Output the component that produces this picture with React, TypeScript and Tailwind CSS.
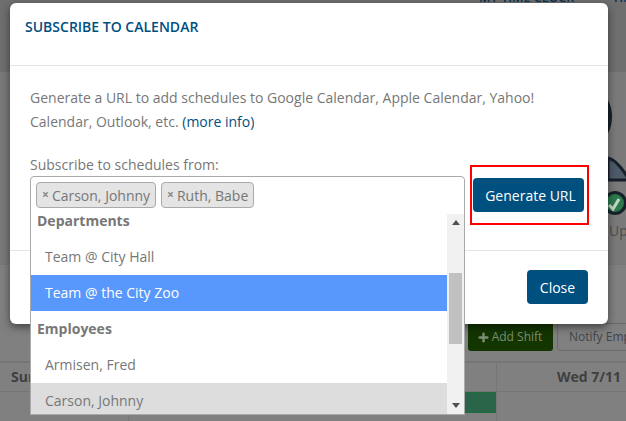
import React from 'react';
import { Plus } from 'lucide-react';

const font = "font-['Open_Sans',sans-serif]";

const Page = () => (
  <div className="flex h-full flex-col bg-[#808080]">
    {/* Top nav, mostly hidden behind the modal */}
    <div className="flex h-[72px] shrink-0 items-start overflow-hidden bg-[#6f6f6f] pl-[479px]">
      <span className="-mt-[11px] flex gap-[38px] text-[12.5px] font-semibold leading-[18px] whitespace-nowrap text-[#0c3350]">
        <span>MY TIME CLOCK</span>
        <span>TIME OFF</span>
      </span>
    </div>

    {/* Avatar area */}
    <div className="flex h-[193px] shrink-0 justify-end border-b border-[#777] bg-[#7a7a7a]">
      <div className="flex w-[18px] flex-col overflow-hidden">
        <svg width="18" height="145" viewBox="0 0 18 145" className="shrink-0">
          <path d="M-6 23 C0 30 2 36 2 44 C2 54 0 60 -6 66" fill="#59646f" stroke="#17202a" strokeWidth="4" />
          <path d="M0 86 C8 88 14 96 20 106 L20 108 L0 108 Z" fill="#4d5a68" stroke="#17202a" strokeWidth="3" />
          <circle cx="7" cy="131" r="10.5" fill="#2c7a4b" stroke="#17202a" strokeWidth="3" />
          <path d="M1 133 L5 137 L11 127" fill="none" stroke="#c5d6c8" strokeWidth="3" />
        </svg>
        <span className="mt-[4px] pl-[1px] text-[14px] leading-[20px] text-[#4d4d4d]">Up</span>
      </div>
    </div>

    <div className="h-[58px] shrink-0" />

    {/* Toolbar */}
    <div className="flex h-[38px] shrink-0 items-start gap-[4px] pl-[468px]">
      <button className="flex h-[28px] w-[85px] shrink-0 items-center justify-center gap-[2px] rounded-b-[3px] bg-[#133500] pr-[2px] text-[12px] text-[#7d8d74]">
        <Plus className="h-[13px] w-[13px]" strokeWidth={4.5} />
        Add Shift
      </button>
      <button className="h-[28px] w-[90px] shrink-0 rounded-b-[3px] border border-[#6a6a6a] pl-[11px] text-left text-[12px] whitespace-nowrap text-[#3f444a]">
        Notify Employees
      </button>
    </div>

    {/* Schedule table */}
    <div className="flex h-[31px] shrink-0 border-t-2 border-b border-[#757575]">
      <div className="w-[129px] pl-[11px] text-[14px] font-bold leading-[28px] text-[#3f3f3f]">Sun</div>
      <div className="w-[367px]" />
      <div className="flex-1 border-l border-[#757575] pl-[60px] text-[14px] font-bold leading-[28px] whitespace-nowrap text-[#3f3f3f]">
        Wed 7/11
      </div>
    </div>
    <div className="flex flex-1">
      <div className="w-[129px] border-r border-[#757575]" />
      <div className="w-[336px]" />
      <div className="h-[21px] w-[31px] border border-[#1e6b3e] bg-[#2a6549]" />
      <div className="flex-1 border-l border-[#757575]" />
    </div>
  </div>
);

const Tag = ({ name }: { name: string }) => (
  <span className="flex h-[26px] items-center gap-[3px] rounded-[4px] border border-[#aaa] bg-[#e4e4e4] pr-[5px] pl-[5px] text-[14px] text-[#777]">
    <span className="text-[12px] font-bold leading-none text-[#888]">×</span>
    {name}
  </span>
);

const Group = ({ label }: { label: string }) => (
  <div className="h-[36px] pl-[6px] text-[14px] font-bold leading-[36px] text-[#777]">{label}</div>
);

const Option = ({ label, className = 'text-[#777]' }: { label: string; className?: string }) => (
  <div className={`h-[36px] pl-[14px] text-[14px] leading-[36px] ${className}`}>{label}</div>
);

const Dropdown = () => (
  <div className="absolute top-[38px] left-0 flex h-[201px] w-[435px] overflow-hidden border border-t-0 border-[#aaa] bg-white">
    <div className="min-w-0 flex-1 overflow-hidden">
      <div className="-mt-[11px]">
        <Group label="Departments" />
        <Option label="Team @ City Hall" />
        <Option label="Team @ the City Zoo" className="bg-[#5897fb] text-white" />
        <Group label="Employees" />
        <Option label="Armisen, Fred" />
        <Option label="Carson, Johnny" className="bg-[#ddd] text-[#777]" />
      </div>
    </div>
    {/* Scrollbar */}
    <div className="flex w-[17px] shrink-0 flex-col items-center bg-[#f1f1f1]">
      <div className="flex h-[17px] w-full items-center justify-center">
        <div className="h-0 w-0 border-x-[4px] border-b-[5px] border-x-transparent border-b-[#505050]" />
      </div>
      <div className="mt-[42px] h-[71px] w-[13px] bg-[#c1c1c1]" />
      <div className="flex-1" />
      <div className="flex h-[17px] w-full items-center justify-center">
        <div className="h-0 w-0 border-x-[4px] border-t-[5px] border-x-transparent border-t-[#505050]" />
      </div>
    </div>
  </div>
);

const Modal = () => (
  <div className="absolute top-[3px] left-[10px] flex h-[321px] w-[598px] flex-col rounded-[6px] bg-white shadow-[0_3px_9px_rgba(0,0,0,0.5)]">
    <div className="h-[63px] shrink-0 border-b border-[#e5e5e5] px-[15px] pt-[14px]">
      <h4 className="text-[14px] font-semibold leading-[20px] text-[#00507f]">SUBSCRIBE TO CALENDAR</h4>
    </div>

    <div className="h-[185px] shrink-0 border-b border-[#e5e5e5] px-[20px] pt-[20px]">
      <p className="text-[14px] leading-[24px] text-[#777]">
        Generate a URL to add schedules to Google Calendar, Apple Calendar, Yahoo!
        <br />
        Calendar, Outlook, etc. <span className="text-[#00507f]">(more info)</span>
      </p>
      <div className="mt-[21px] flex items-start">
        <div className="w-[435px] shrink-0">
          <div className="h-[21px] text-[14px] leading-[20px] text-[#777]">Subscribe to schedules from:</div>
          <div className="relative">
            <div className="flex h-[39px] items-start gap-[5px] rounded-t-[4px] border border-[#aaa] bg-white pt-[5px] pl-[5px]">
              <Tag name="Carson, Johnny" />
              <Tag name="Ruth, Babe" />
            </div>
            <Dropdown />
          </div>
        </div>
        <div className="mt-[10px] ml-[5px] h-[60px] w-[119px] shrink-0 border-2 border-[#f00] pt-[11px] pl-[1px]">
          <button className="h-[34px] w-[111px] rounded-[4px] bg-[#00507f] pl-[4px] text-[14px] text-white">Generate URL</button>
        </div>
      </div>
    </div>

    <div className="flex flex-1 items-start justify-end pt-[19px] pr-[20px]">
      <button className="h-[34px] w-[61px] rounded-[4px] bg-[#00507f] text-[14px] text-white">Close</button>
    </div>
  </div>
);

const App: React.FC = () => (
  <div className={`relative h-[421px] w-[626px] overflow-hidden ${font}`}>
    <Page />
    <Modal />
  </div>
);

export default App;
